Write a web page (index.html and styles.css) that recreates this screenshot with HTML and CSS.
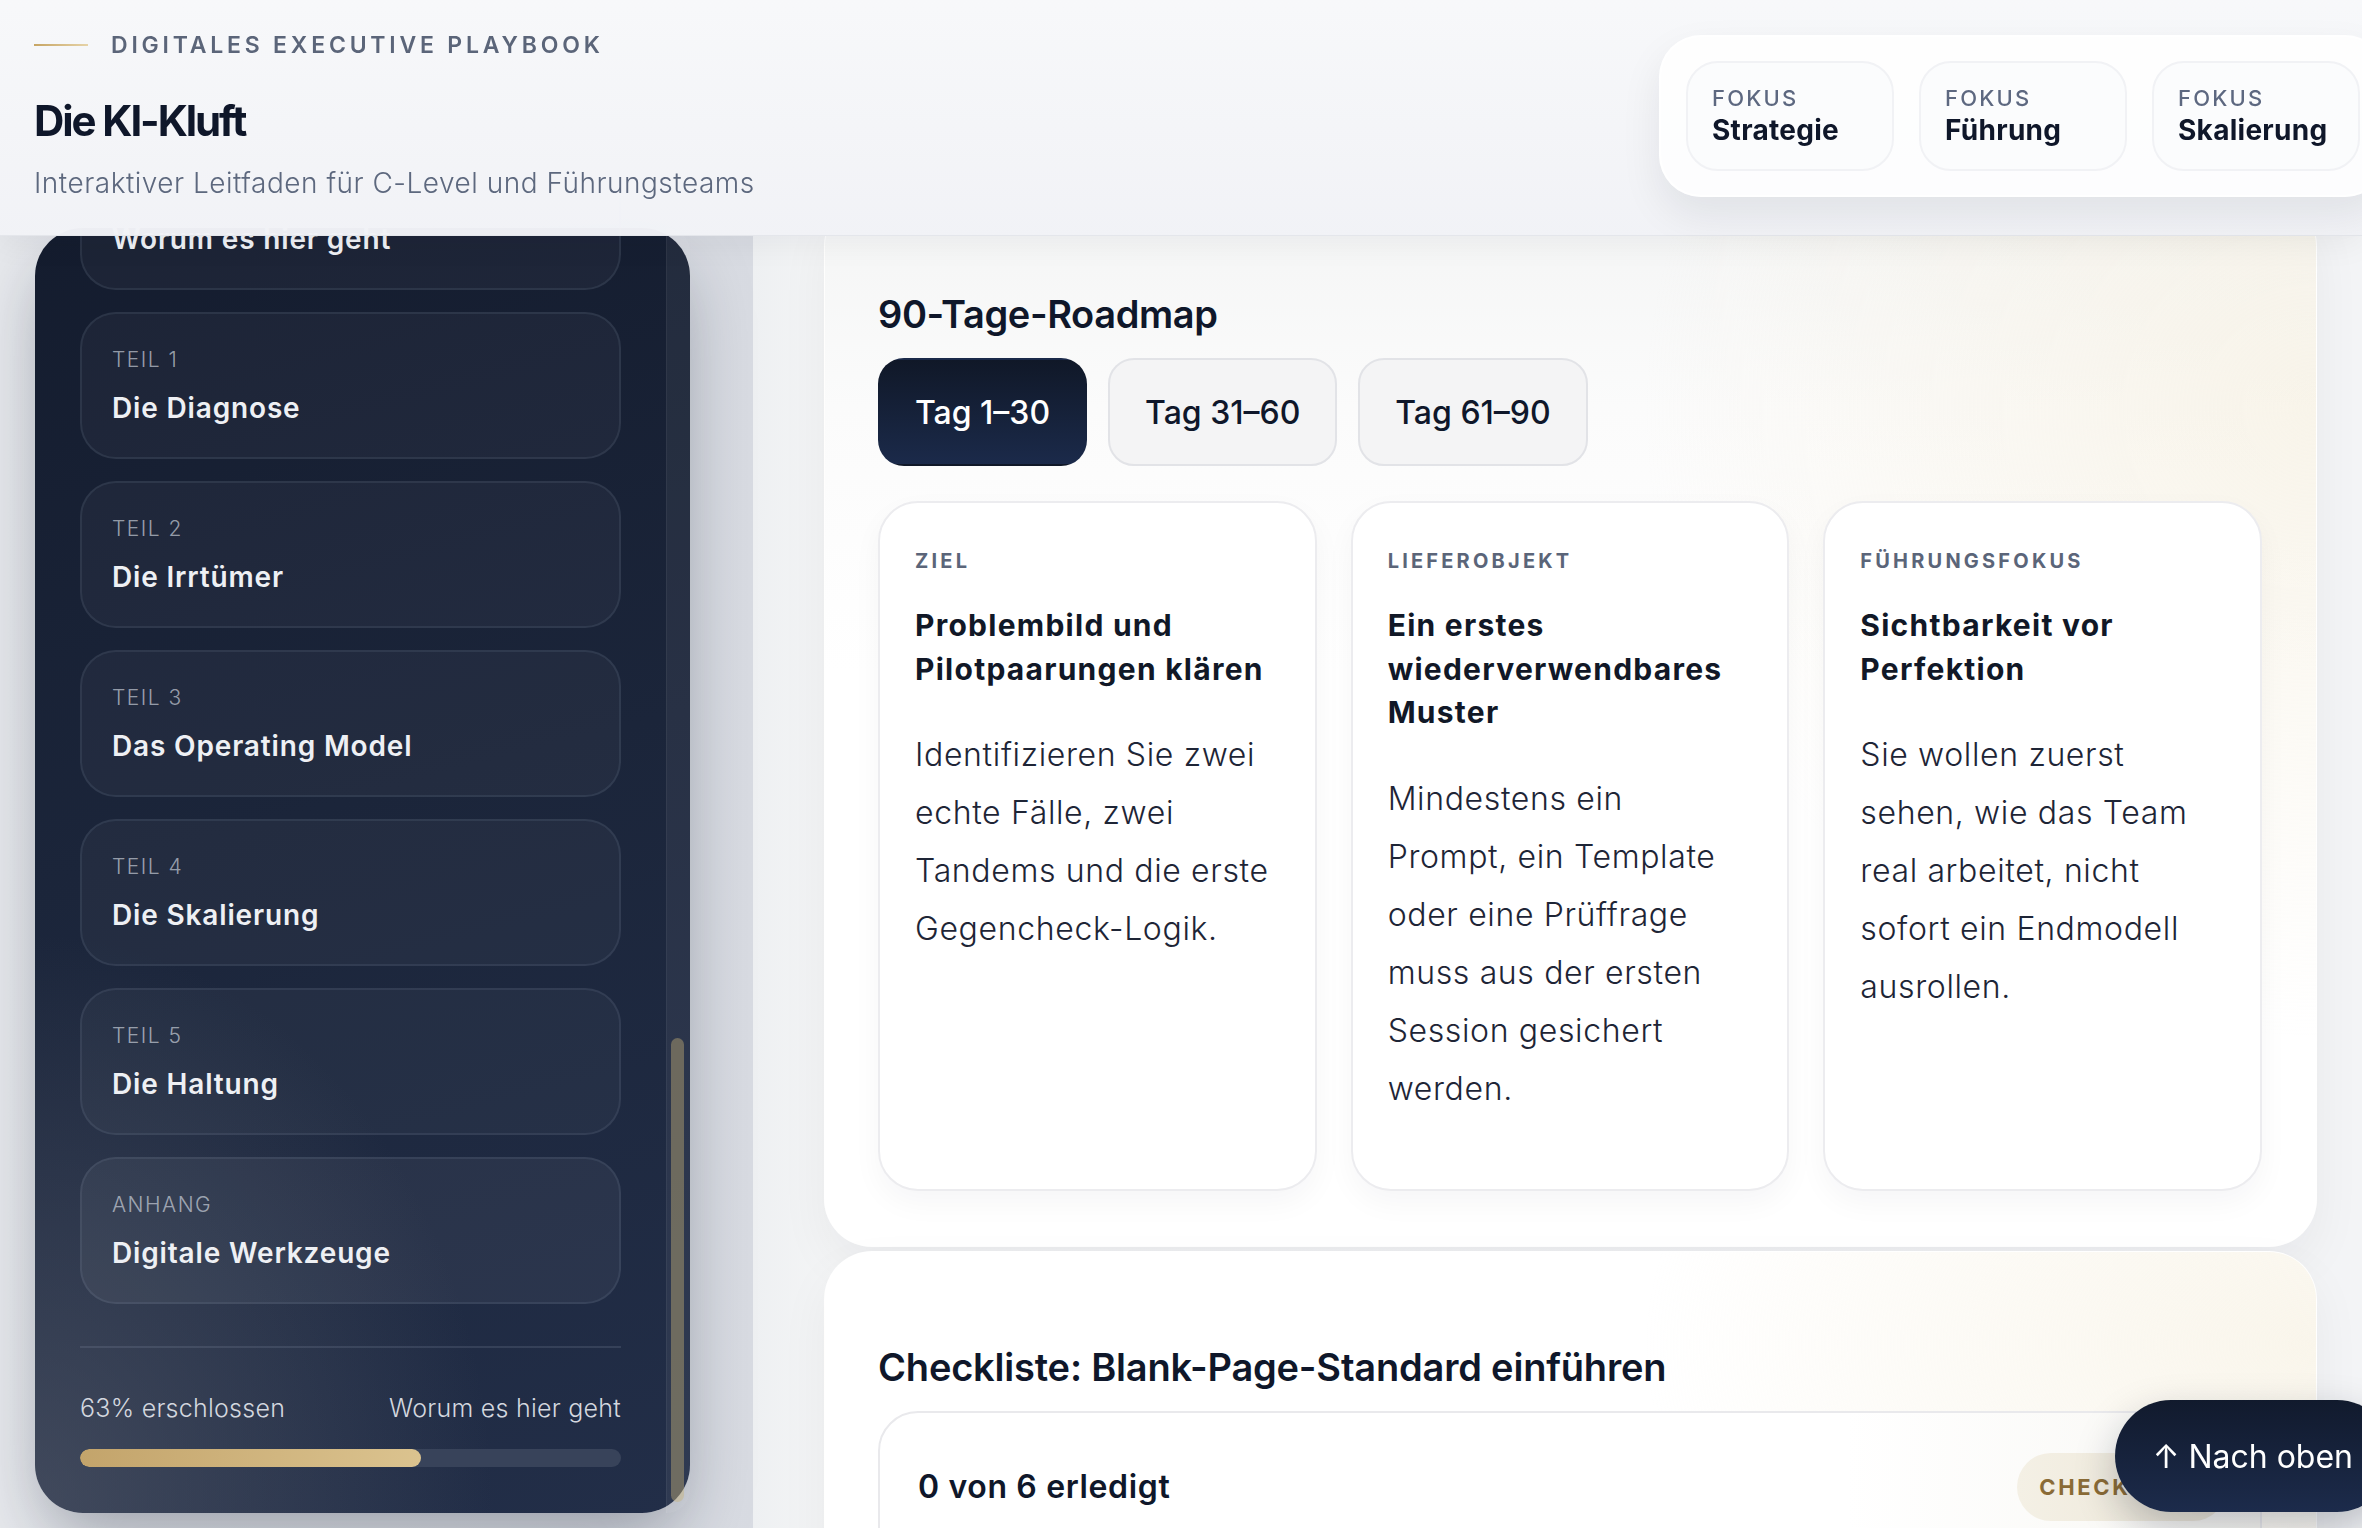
FILE: index.html
```html
<!DOCTYPE html>
<html lang="de">
<head>
<meta charset="utf-8">
<title>Die KI-Kluft – Digitales Executive Playbook</title>
<link rel="stylesheet" href="styles.css">
</head>
<body>
<header class="topbar">
  <div class="brand">
    <div class="eyebrow"><span class="eyebrow-line"></span><span>Digitales Executive Playbook</span></div>
    <h1 class="title">Die KI-Kluft</h1>
    <p class="subtitle">Interaktiver Leitfaden für C-Level und Führungsteams</p>
  </div>
  <div class="focus">
    <div class="focus-pill"><span class="focus-label">Fokus</span><span class="focus-value">Strategie</span></div>
    <div class="focus-pill"><span class="focus-label">Fokus</span><span class="focus-value">Führung</span></div>
    <div class="focus-pill"><span class="focus-label">Fokus</span><span class="focus-value">Skalierung</span></div>
  </div>
</header>

<div class="layout">
  <aside class="aside">
    <nav class="panel">
      <div class="nav-list">
        <a class="nav-card"><span class="nav-label">Einstieg</span><span class="nav-title">Worum es hier geht</span></a>
        <a class="nav-card"><span class="nav-label">Teil 1</span><span class="nav-title">Die Diagnose</span></a>
        <a class="nav-card"><span class="nav-label">Teil 2</span><span class="nav-title">Die Irrtümer</span></a>
        <a class="nav-card"><span class="nav-label">Teil 3</span><span class="nav-title">Das Operating Model</span></a>
        <a class="nav-card"><span class="nav-label">Teil 4</span><span class="nav-title">Die Skalierung</span></a>
        <a class="nav-card"><span class="nav-label">Teil 5</span><span class="nav-title">Die Haltung</span></a>
        <a class="nav-card nav-card--appendix"><span class="nav-label">Anhang</span><span class="nav-title">Digitale Werkzeuge</span></a>
      </div>
      <div class="progress">
        <div class="progress-row"><span>63% erschlossen</span><span>Worum es hier geht</span></div>
        <div class="bar"><div class="bar-fill" style="width:63%"></div></div>
      </div>
      <span class="scroll-track"></span>
      <span class="scroll-thumb"></span>
    </nav>
  </aside>

  <main class="main">
    <section class="section section--roadmap">
      <h2 class="section-title">90-Tage-Roadmap</h2>
      <div class="tabs">
        <button class="tab tab--active">Tag 1–30</button>
        <button class="tab">Tag 31–60</button>
        <button class="tab">Tag 61–90</button>
      </div>
      <div class="cards">
        <article class="card">
          <div class="card-label">Ziel</div>
          <h3 class="card-title">Problembild und Pilotpaarungen klären</h3>
          <p class="card-text">Identifizieren Sie zwei echte Fälle, zwei Tandems und die erste Gegencheck-Logik.</p>
        </article>
        <article class="card">
          <div class="card-label">Lieferobjekt</div>
          <h3 class="card-title">Ein erstes wiederverwendbares Muster</h3>
          <p class="card-text">Mindestens ein Prompt, ein Template oder eine Prüffrage muss aus der ersten Session gesichert werden.</p>
        </article>
        <article class="card">
          <div class="card-label">Führungsfokus</div>
          <h3 class="card-title">Sichtbarkeit vor Perfektion</h3>
          <p class="card-text">Sie wollen zuerst sehen, wie das Team real arbeitet, nicht sofort ein Endmodell ausrollen.</p>
        </article>
      </div>
    </section>

    <section class="section section--checklist">
      <h2 class="section-title section-title--wide">Checkliste: Blank-Page-Standard einführen</h2>
      <div class="checklist">
        <div class="checklist-head">
          <span class="checklist-count">0 von 6 erledigt</span>
          <span class="badge">Checkliste</span>
        </div>
        <ul class="checklist-items">
          <li>Ein gemeinsames Startformat für jede neue Aufgabe festlegen</li>
          <li>Erste Entwürfe grundsätzlich mit KI erzeugen lassen</li>
        </ul>
      </div>
    </section>
  </main>
</div>

<a class="to-top" href="#">↑ Nach oben</a>
</body>
</html>
```

FILE: styles.css
```css
* { box-sizing: border-box; }

html, body {
  margin: 0;
  height: 100%;
  overflow: hidden;
}

body {
  font-family: "Inter", "Noto Sans", sans-serif;
  color: #0f172a;
  background: #f3f4f6;
}

/* ---------- Header ---------- */
.topbar {
  position: fixed;
  top: 0;
  left: 0;
  right: 0;
  height: 236px;
  z-index: 20;
  display: flex;
  justify-content: space-between;
  align-items: flex-start;
  padding: 30px 0 0 34px;
  background: linear-gradient(180deg, rgba(247,248,250,0.98), rgba(241,242,246,0.98));
  border-bottom: 1px solid #e4e6eb;
  box-shadow: 0 8px 30px rgba(15, 23, 42, 0.05);
}

.eyebrow {
  display: flex;
  align-items: center;
  gap: 23px;
  font-size: 23px;
  line-height: 30px;
  font-weight: 600;
  letter-spacing: 0.165em;
  text-transform: uppercase;
  color: #5b6579;
}

.eyebrow-line {
  flex-shrink: 0;
  width: 54px;
  height: 2px;
  background: linear-gradient(90deg, #c7a564, #e6d3a8);
}

.title {
  margin: 36px 0 0;
  font-size: 42px;
  line-height: 50px;
  font-weight: 700;
  letter-spacing: -0.05em;
  color: #0f172a;
}

.subtitle {
  margin: 19px 0 0;
  font-size: 28px;
  line-height: 36px;
  font-weight: 300;
  letter-spacing: 0.018em;
  color: #5d687e;
}

.focus {
  flex-shrink: 0;
  display: flex;
  gap: 25px;
  margin-top: 5px;
  margin-right: -25px;
  padding: 24px 25px;
  border-radius: 42px;
  background: rgba(255, 255, 255, 0.88);
  border: 2px solid rgba(255, 255, 255, 0.95);
  box-shadow: 0 18px 40px rgba(15, 23, 42, 0.08);
}

.focus-pill {
  min-width: 208px;
  display: flex;
  flex-direction: column;
  gap: 3px;
  padding: 22px 24px 23px;
  border-radius: 32px;
  background: #fbfcfd;
  border: 2px solid #f1f2f5;
}

.focus-label {
  font-size: 22px;
  line-height: 26px;
  font-weight: 500;
  letter-spacing: 0.1em;
  text-transform: uppercase;
  color: #5d6880;
}

.focus-value {
  font-size: 28px;
  line-height: 32px;
  font-weight: 700;
  letter-spacing: 0.01em;
  color: #0f172a;
}

/* ---------- Layout ---------- */
.layout {
  display: grid;
  grid-template-columns: 753px 1fr;
  padding-top: 198px;
  min-height: 100%;
}

.aside {
  padding: 30px 63px 0 35px;
  background: linear-gradient(90deg, #e7e9ed 0%, #e0e3e8 60%, #d8dbe2 100%);
}

/* ---------- Sidebar panel ---------- */
.panel {
  position: relative;
  display: flex;
  flex-direction: column;
  padding: 45px 69px 46px 45px;
  border-radius: 48px;
  background:
    radial-gradient(ellipse 70% 45% at 0% 100%, rgba(92, 98, 112, 0.55), rgba(92, 98, 112, 0) 100%),
    linear-gradient(165deg, #141c2e 0%, #1b253a 45%, #222e48 100%);
  box-shadow: 0 30px 70px -10px rgba(15, 23, 42, 0.35);
}

.nav-list {
  display: flex;
  flex-direction: column;
  gap: 22px;
  margin-top: -130px;
}

.nav-card {
  display: flex;
  flex-direction: column;
  gap: 15px;
  height: 147px;
  padding: 31px 32px 31px 30px;
  border-radius: 36px;
  background: rgba(255, 255, 255, 0.035);
  border: 2px solid rgba(148, 163, 184, 0.13);
  text-decoration: none;
}

.nav-card--appendix {
  background: rgba(255, 255, 255, 0.05);
}

.nav-label {
  font-size: 21px;
  line-height: 30px;
  font-weight: 300;
  letter-spacing: 0.07em;
  text-transform: uppercase;
  color: rgba(226, 232, 240, 0.62);
}

.nav-title {
  font-size: 28px;
  line-height: 36px;
  font-weight: 600;
  letter-spacing: 0.03em;
  color: #eef0f4;
}

.progress {
  margin-top: 42px;
  padding-top: 44px;
  border-top: 2px solid rgba(148, 163, 184, 0.18);
}

.progress-row {
  display: flex;
  justify-content: space-between;
  font-size: 25px;
  line-height: 32px;
  font-weight: 300;
  letter-spacing: 0.01em;
  color: #d3d7df;
}

.bar {
  margin-top: 25px;
  height: 18px;
  border-radius: 9px;
  background: #38435a;
  overflow: hidden;
}

.bar-fill {
  height: 100%;
  border-radius: 9px;
  background: linear-gradient(90deg, #c3a46b, #dbc38f);
}

.scroll-track {
  position: absolute;
  top: 0;
  bottom: 0;
  right: 0;
  width: 24px;
  border-left: 1px solid rgba(255, 255, 255, 0.05);
  border-radius: 0 48px 48px 0;
  background: rgba(255, 255, 255, 0.06);
}

.scroll-thumb {
  position: absolute;
  right: 6px;
  top: 810px;
  width: 13px;
  height: 464px;
  border-radius: 7px;
  background: rgba(201, 178, 120, 0.42);
}

/* ---------- Main ---------- */
.main {
  display: flex;
  flex-direction: column;
  gap: 4px;
  padding: 0 45px 0 71px;
  background: linear-gradient(90deg, #eef0f2 0%, #f4f5f6 5%, #f3f4f6 100%);
}

.section {
  padding: 92px 54px 55px 53px;
  border-radius: 48px;
  border: 1px solid rgba(255, 255, 255, 0.9);
  background:
    radial-gradient(ellipse 45% 60% at 100% 20%, rgba(247, 241, 226, 0.7), rgba(247, 241, 226, 0) 100%),
    linear-gradient(180deg, #f4f5f5 0%, #fbfbfb 20%, #ffffff 45%);
  box-shadow: 0 20px 50px rgba(15, 23, 42, 0.05);
}

.section--checklist {
  background:
    radial-gradient(ellipse 45% 70% at 100% 15%, rgba(248, 243, 230, 0.8), rgba(248, 243, 230, 0) 100%),
    #ffffff;
}

.section-title {
  margin: 0;
  font-size: 38px;
  line-height: 47px;
  font-weight: 600;
  letter-spacing: -0.01em;
  color: #0f172a;
}

.section-title--wide {
  letter-spacing: -0.005em;
}

.tabs {
  display: flex;
  gap: 21px;
  margin-top: 20px;
}

.tab {
  height: 108px;
  padding: 0 35px;
  border-radius: 26px;
  border: 2px solid #e2e3e7;
  background: #f4f4f5;
  font-family: inherit;
  font-size: 32px;
  font-weight: 500;
  color: #0f172a;
}

.tab--active {
  border-color: transparent;
  background: linear-gradient(180deg, #101828 0%, #1b2a4a 100%);
  color: #ffffff;
}

.cards {
  display: grid;
  grid-template-columns: repeat(3, 1fr);
  gap: 34px;
  margin-top: 35px;
}

.card {
  min-height: 690px;
  padding: 44px 42px 40px 35px;
  border-radius: 40px;
  border: 2px solid #ececef;
  background: #ffffff;
  box-shadow: 0 12px 30px rgba(15, 23, 42, 0.04);
}

.card-label {
  font-size: 20px;
  line-height: 28px;
  font-weight: 700;
  letter-spacing: 0.16em;
  text-transform: uppercase;
  color: #5b6579;
}

.card-title {
  margin: 29px 0 0;
  font-size: 30px;
  line-height: 43.5px;
  font-weight: 700;
  letter-spacing: 0.042em;
  color: #111827;
}

.card-text {
  margin: 35px 0 0;
  font-size: 32px;
  line-height: 58px;
  font-weight: 300;
  letter-spacing: 0.02em;
  color: #1e2536;
}

/* ---------- Checklist ---------- */
.checklist {
  margin-top: 20px;
  padding: 40px 40px 40px 38px;
  border-radius: 40px;
  border: 2px solid #e9e9ec;
  background: linear-gradient(90deg, #ffffff 0%, #ffffff 70%, #f8f7f3 100%);
  min-height: 400px;
}

.checklist-head {
  display: flex;
  justify-content: space-between;
  align-items: center;
}

.checklist-count {
  font-size: 32px;
  line-height: 40px;
  font-weight: 600;
  letter-spacing: 0.02em;
  color: #0f172a;
}

.badge {
  display: flex;
  align-items: center;
  height: 68px;
  padding: 0 22px;
  margin-right: -7px;
  border-radius: 34px;
  background: linear-gradient(90deg, #f4f0e5, #ece6d7);
  font-size: 22px;
  font-weight: 700;
  letter-spacing: 0.12em;
  text-transform: uppercase;
  color: #8a6b36;
}

.checklist-items {
  margin: 40px 0 0;
  padding: 0;
  list-style: none;
  font-size: 28px;
  line-height: 40px;
  font-weight: 300;
}

/* ---------- Back to top ---------- */
.to-top {
  position: fixed;
  right: -31px;
  bottom: 16px;
  z-index: 30;
  display: flex;
  align-items: center;
  height: 112px;
  padding: 0 40px 0 38px;
  border-radius: 56px;
  background: linear-gradient(180deg, #111a2d 0%, #1c2b4b 100%);
  box-shadow: 0 16px 40px rgba(15, 23, 42, 0.25);
  font-size: 32px;
  font-weight: 400;
  color: #ffffff;
  text-decoration: none;
}
```
